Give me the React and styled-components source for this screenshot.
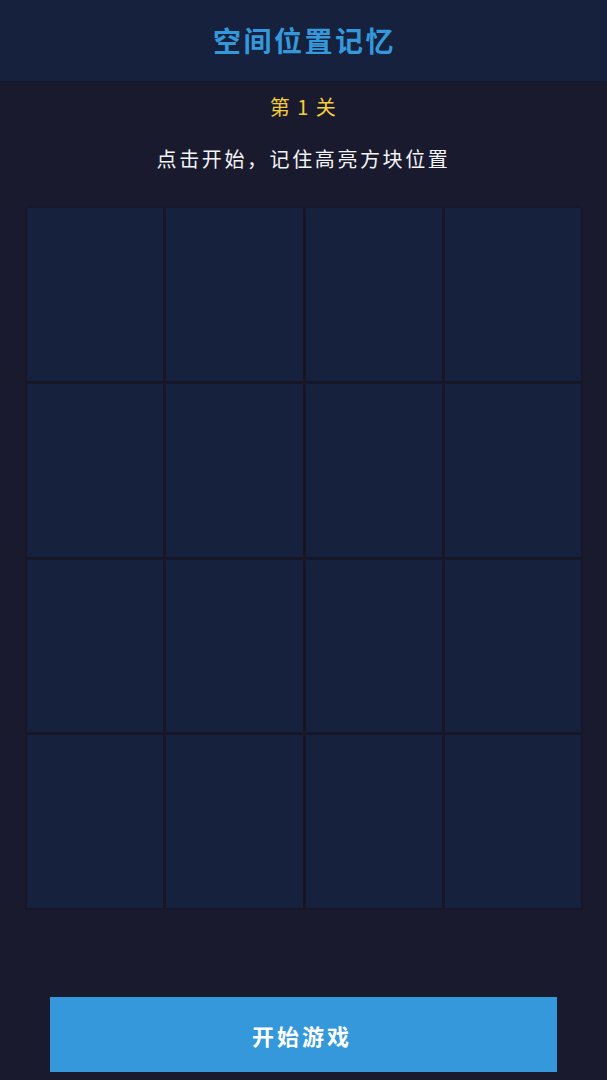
import React from 'react';
import styled, { createGlobalStyle } from 'styled-components';

const GlobalStyle = createGlobalStyle`
  html, body {
    margin: 0;
    padding: 0;
    background: #1a1a2e;
  }

  * {
    box-sizing: border-box;
  }
`;

const StyledPage = styled.div`
  display: flex;
  flex-direction: column;
  align-items: center;
  height: 100vh;
  background: #1a1a2e;
  font-family: 'Noto Sans CJK SC', 'Noto Sans', sans-serif;
`;

const StyledHeader = styled.header`
  display: flex;
  align-items: center;
  justify-content: center;
  width: 100%;
  height: 81px;
  background: #16213e;

  h1 {
    margin: 0;
    color: #3498db;
    font-size: 28px;
    font-weight: 700;
    letter-spacing: 2.5px;
    line-height: 1;
    padding-left: 2px;
    padding-bottom: 2px;
  }
`;

const StyledLevel = styled.div`
  margin-top: 12px;
  color: #f4cd3a;
  font-size: 20px;
  line-height: 28px;
  letter-spacing: 1.5px;
`;

const StyledHint = styled.p`
  margin: 24px 0 0;
  color: #f2f4f5;
  font-size: 20px;
  line-height: 28px;
  letter-spacing: 2.6px;
`;

const StyledBoard = styled.div`
  display: grid;
  grid-template-columns: repeat(${({ cols }) => cols}, 1fr);
  grid-template-rows: repeat(${({ rows }) => rows}, 1fr);
  gap: 3px;
  width: 554px;
  height: 700px;
  margin-top: 35px;
  margin-left: 1px;
`;

const StyledCell = styled.div`
  background: ${({ lit }) => (lit ? '#3498db' : '#16213e')};
  box-shadow: 0 0 3px rgba(0, 0, 0, 0.3);
`;

const StyledButton = styled.button`
  width: 507px;
  height: 75px;
  margin-top: auto;
  margin-bottom: 8px;
  border: 0;
  background: #3498db;
  color: #ffffff;
  font-family: inherit;
  font-size: 22px;
  font-weight: 700;
  letter-spacing: 3px;
  padding-left: 3px;
  cursor: pointer;
`;

const App = () => {
  const cells = Array.from({ length: 16 }, (_, i) => i);

  return (
    <>
      <GlobalStyle />
      <StyledPage>
        <StyledHeader>
          <h1>空间位置记忆</h1>
        </StyledHeader>

        <StyledLevel>第 1 关</StyledLevel>
        <StyledHint>点击开始，记住高亮方块位置</StyledHint>

        <StyledBoard cols={4} rows={4}>
          {cells.map(i => (
            <StyledCell key={i} />
          ))}
        </StyledBoard>

        <StyledButton>开始游戏</StyledButton>
      </StyledPage>
    </>
  );
};

export default App;
